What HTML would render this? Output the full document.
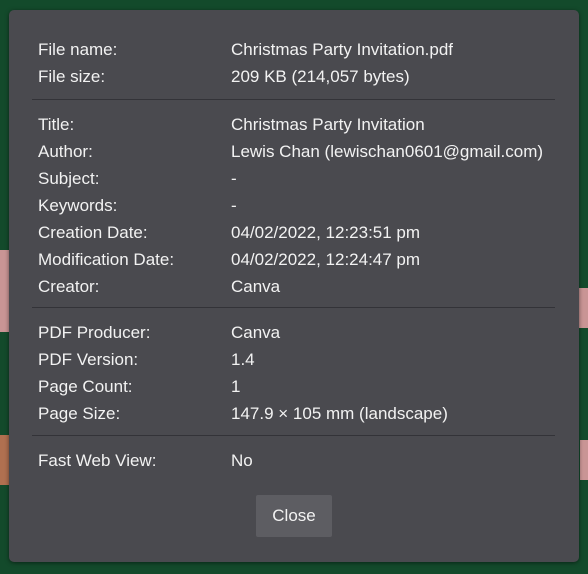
<!DOCTYPE html>
<html><head><style>
body{margin:0;width:588px;height:574px;background:#134a2b;position:relative;overflow:hidden;font-family:"Liberation Sans",sans-serif;}
.p{position:absolute;background:#c99595;}
.d{position:absolute;left:9px;top:10px;width:570px;height:552px;background:#4a4a4f;border-radius:5px;box-shadow:0 1px 4px rgba(0,0,0,.5);}
.r{position:absolute;left:29px;color:#f2f2f2;font-size:17px;line-height:20px;white-space:nowrap;}
.r span{position:absolute;left:193px;}
.s{position:absolute;left:23px;width:523px;height:1px;background:#333338;}
.b{position:absolute;left:247px;top:485px;width:76px;height:42px;background:#5d5d62;border-radius:2px;color:#f2f2f2;font-size:17px;line-height:42px;text-align:center;}
</style></head><body>
<div class="p" style="left:0;top:250px;width:9px;height:82px"></div>
<div class="p" style="left:0;top:435px;width:9px;height:50px;background:#b07050"></div>
<div class="p" style="left:579px;top:288px;width:9px;height:40px"></div>
<div class="p" style="left:580px;top:440px;width:8px;height:40px"></div>
<div class="d">
<div class="r" style="top:30px">File name:<span>Christmas Party Invitation.pdf</span></div>
<div class="r" style="top:57px">File size:<span>209 KB (214,057 bytes)</span></div>
<div class="s" style="top:89px"></div>
<div class="r" style="top:105px">Title:<span>Christmas Party Invitation</span></div>
<div class="r" style="top:132px">Author:<span>Lewis Chan (lewischan0601@gmail.com)</span></div>
<div class="r" style="top:159px">Subject:<span>-</span></div>
<div class="r" style="top:186px">Keywords:<span>-</span></div>
<div class="r" style="top:213px">Creation Date:<span>04/02/2022, 12:23:51 pm</span></div>
<div class="r" style="top:240px">Modification Date:<span>04/02/2022, 12:24:47 pm</span></div>
<div class="r" style="top:267px">Creator:<span>Canva</span></div>
<div class="s" style="top:297px"></div>
<div class="r" style="top:313px">PDF Producer:<span>Canva</span></div>
<div class="r" style="top:340px">PDF Version:<span>1.4</span></div>
<div class="r" style="top:367px">Page Count:<span>1</span></div>
<div class="r" style="top:394px">Page Size:<span>147.9 × 105 mm (landscape)</span></div>
<div class="s" style="top:425px"></div>
<div class="r" style="top:441px">Fast Web View:<span>No</span></div>
<div class="b">Close</div>
</div>
</body></html>
